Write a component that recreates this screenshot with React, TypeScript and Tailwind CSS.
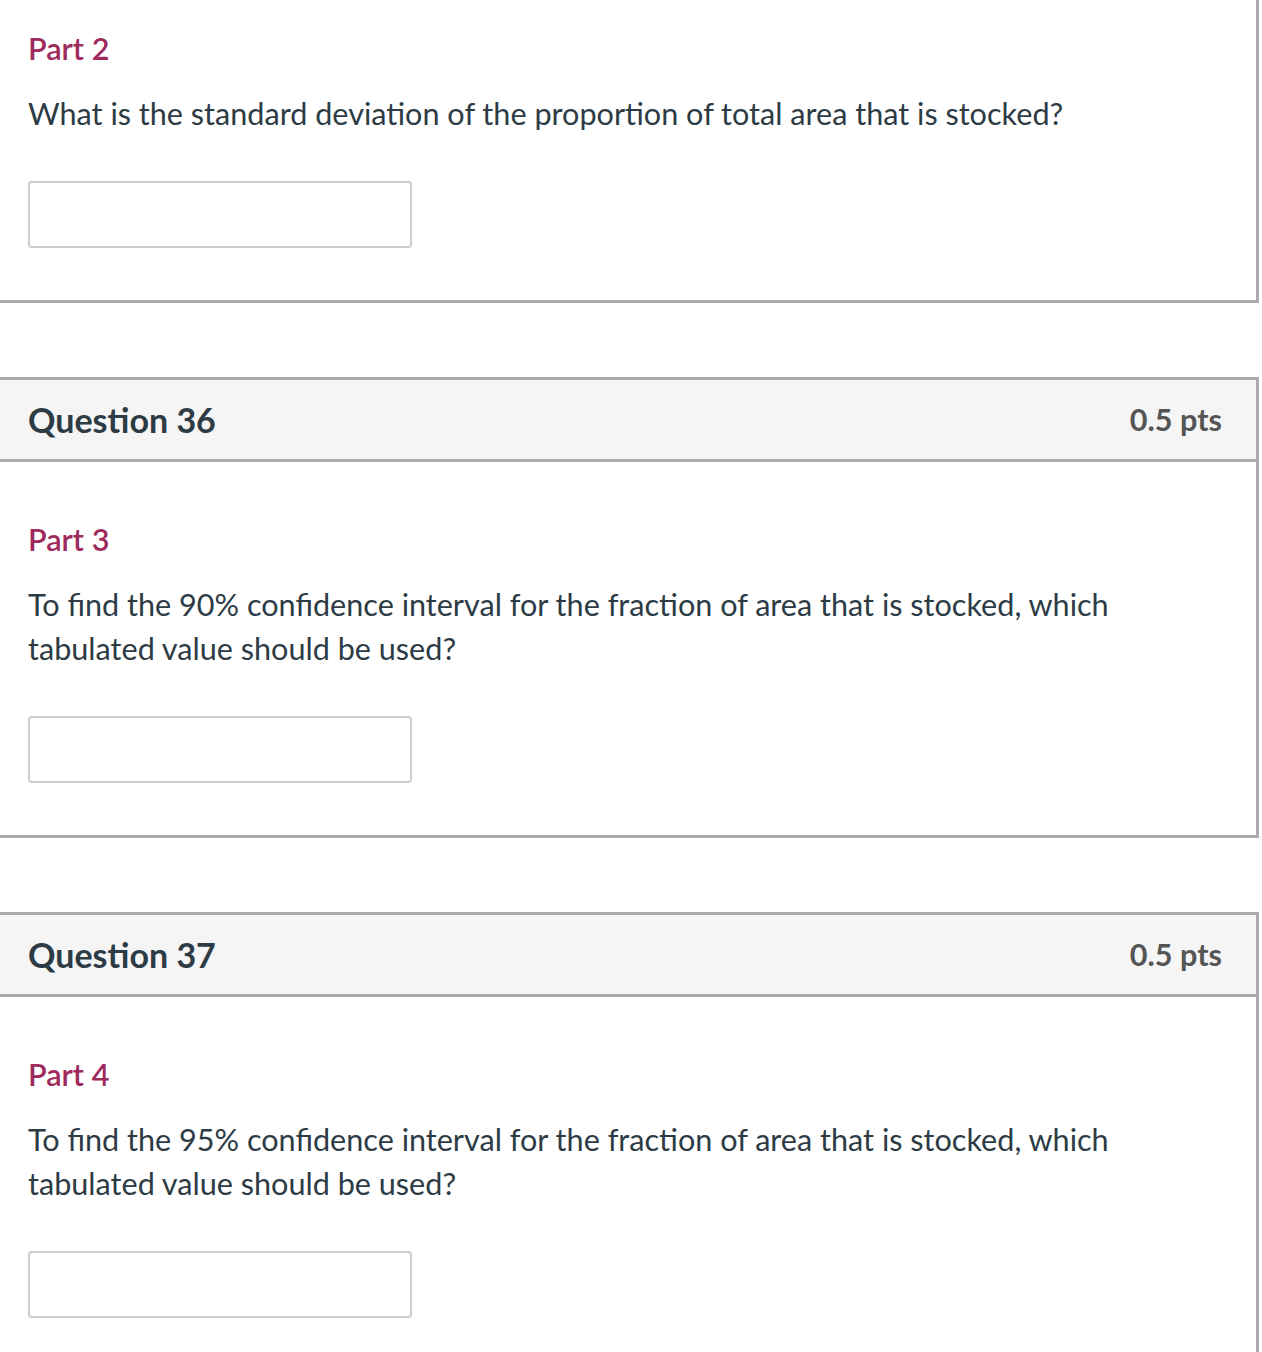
import React from "react";

type Part = {
  label: string;
  text: string;
};

const QuestionBody = ({ part }: { part: Part }) => (
  <div className="pt-[56px] pb-[52px] pl-[28px] pr-[40px]">
    <h3 className="text-[30.6px] leading-[44px] font-semibold text-[#9e2a5e]">{part.label}</h3>
    <p className="mt-[21px] text-[30.6px] leading-[44px] text-[#2d3b45] max-w-[1120px]">{part.text}</p>
    <input
      type="text"
      className="mt-[45px] block w-[384px] h-[67px] border-2 border-[#cdcdcd] rounded-[4px] bg-white outline-none"
    />
  </div>
);

const QuestionCard = ({ num, pts, part }: { num?: number; pts?: string; part: Part }) => (
  <div className="w-[1259px] bg-white border-y-[3px] border-r-[3px] border-[#ababab]">
    {num !== undefined && (
      <div className="h-[82px] flex items-center justify-between pl-[28px] pr-[34px] bg-[#f5f5f5] border-b-[3px] border-[#ababab]">
        <h2 className="text-[34px] font-bold text-[#2d3b45]">Question {num}</h2>
        <span className="text-[30.6px] font-bold text-[#555555]">{pts}</span>
      </div>
    )}
    <QuestionBody part={part} />
  </div>
);

export default function App() {
  return (
    <div className="min-h-[1352px] bg-white overflow-hidden" style={{ fontFamily: "Lato, 'Open Sans', sans-serif" }}>
      <div className="-mt-[32px] flex flex-col gap-[74px]">
        <QuestionCard
          part={{
            label: "Part 2",
            text: "What is the standard deviation of the proportion of total area that is stocked?",
          }}
        />
        <QuestionCard
          num={36}
          pts="0.5 pts"
          part={{
            label: "Part 3",
            text: "To find the 90% confidence interval for the fraction of area that is stocked, which tabulated value should be used?",
          }}
        />
        <QuestionCard
          num={37}
          pts="0.5 pts"
          part={{
            label: "Part 4",
            text: "To find the 95% confidence interval for the fraction of area that is stocked, which tabulated value should be used?",
          }}
        />
      </div>
    </div>
  );
}
